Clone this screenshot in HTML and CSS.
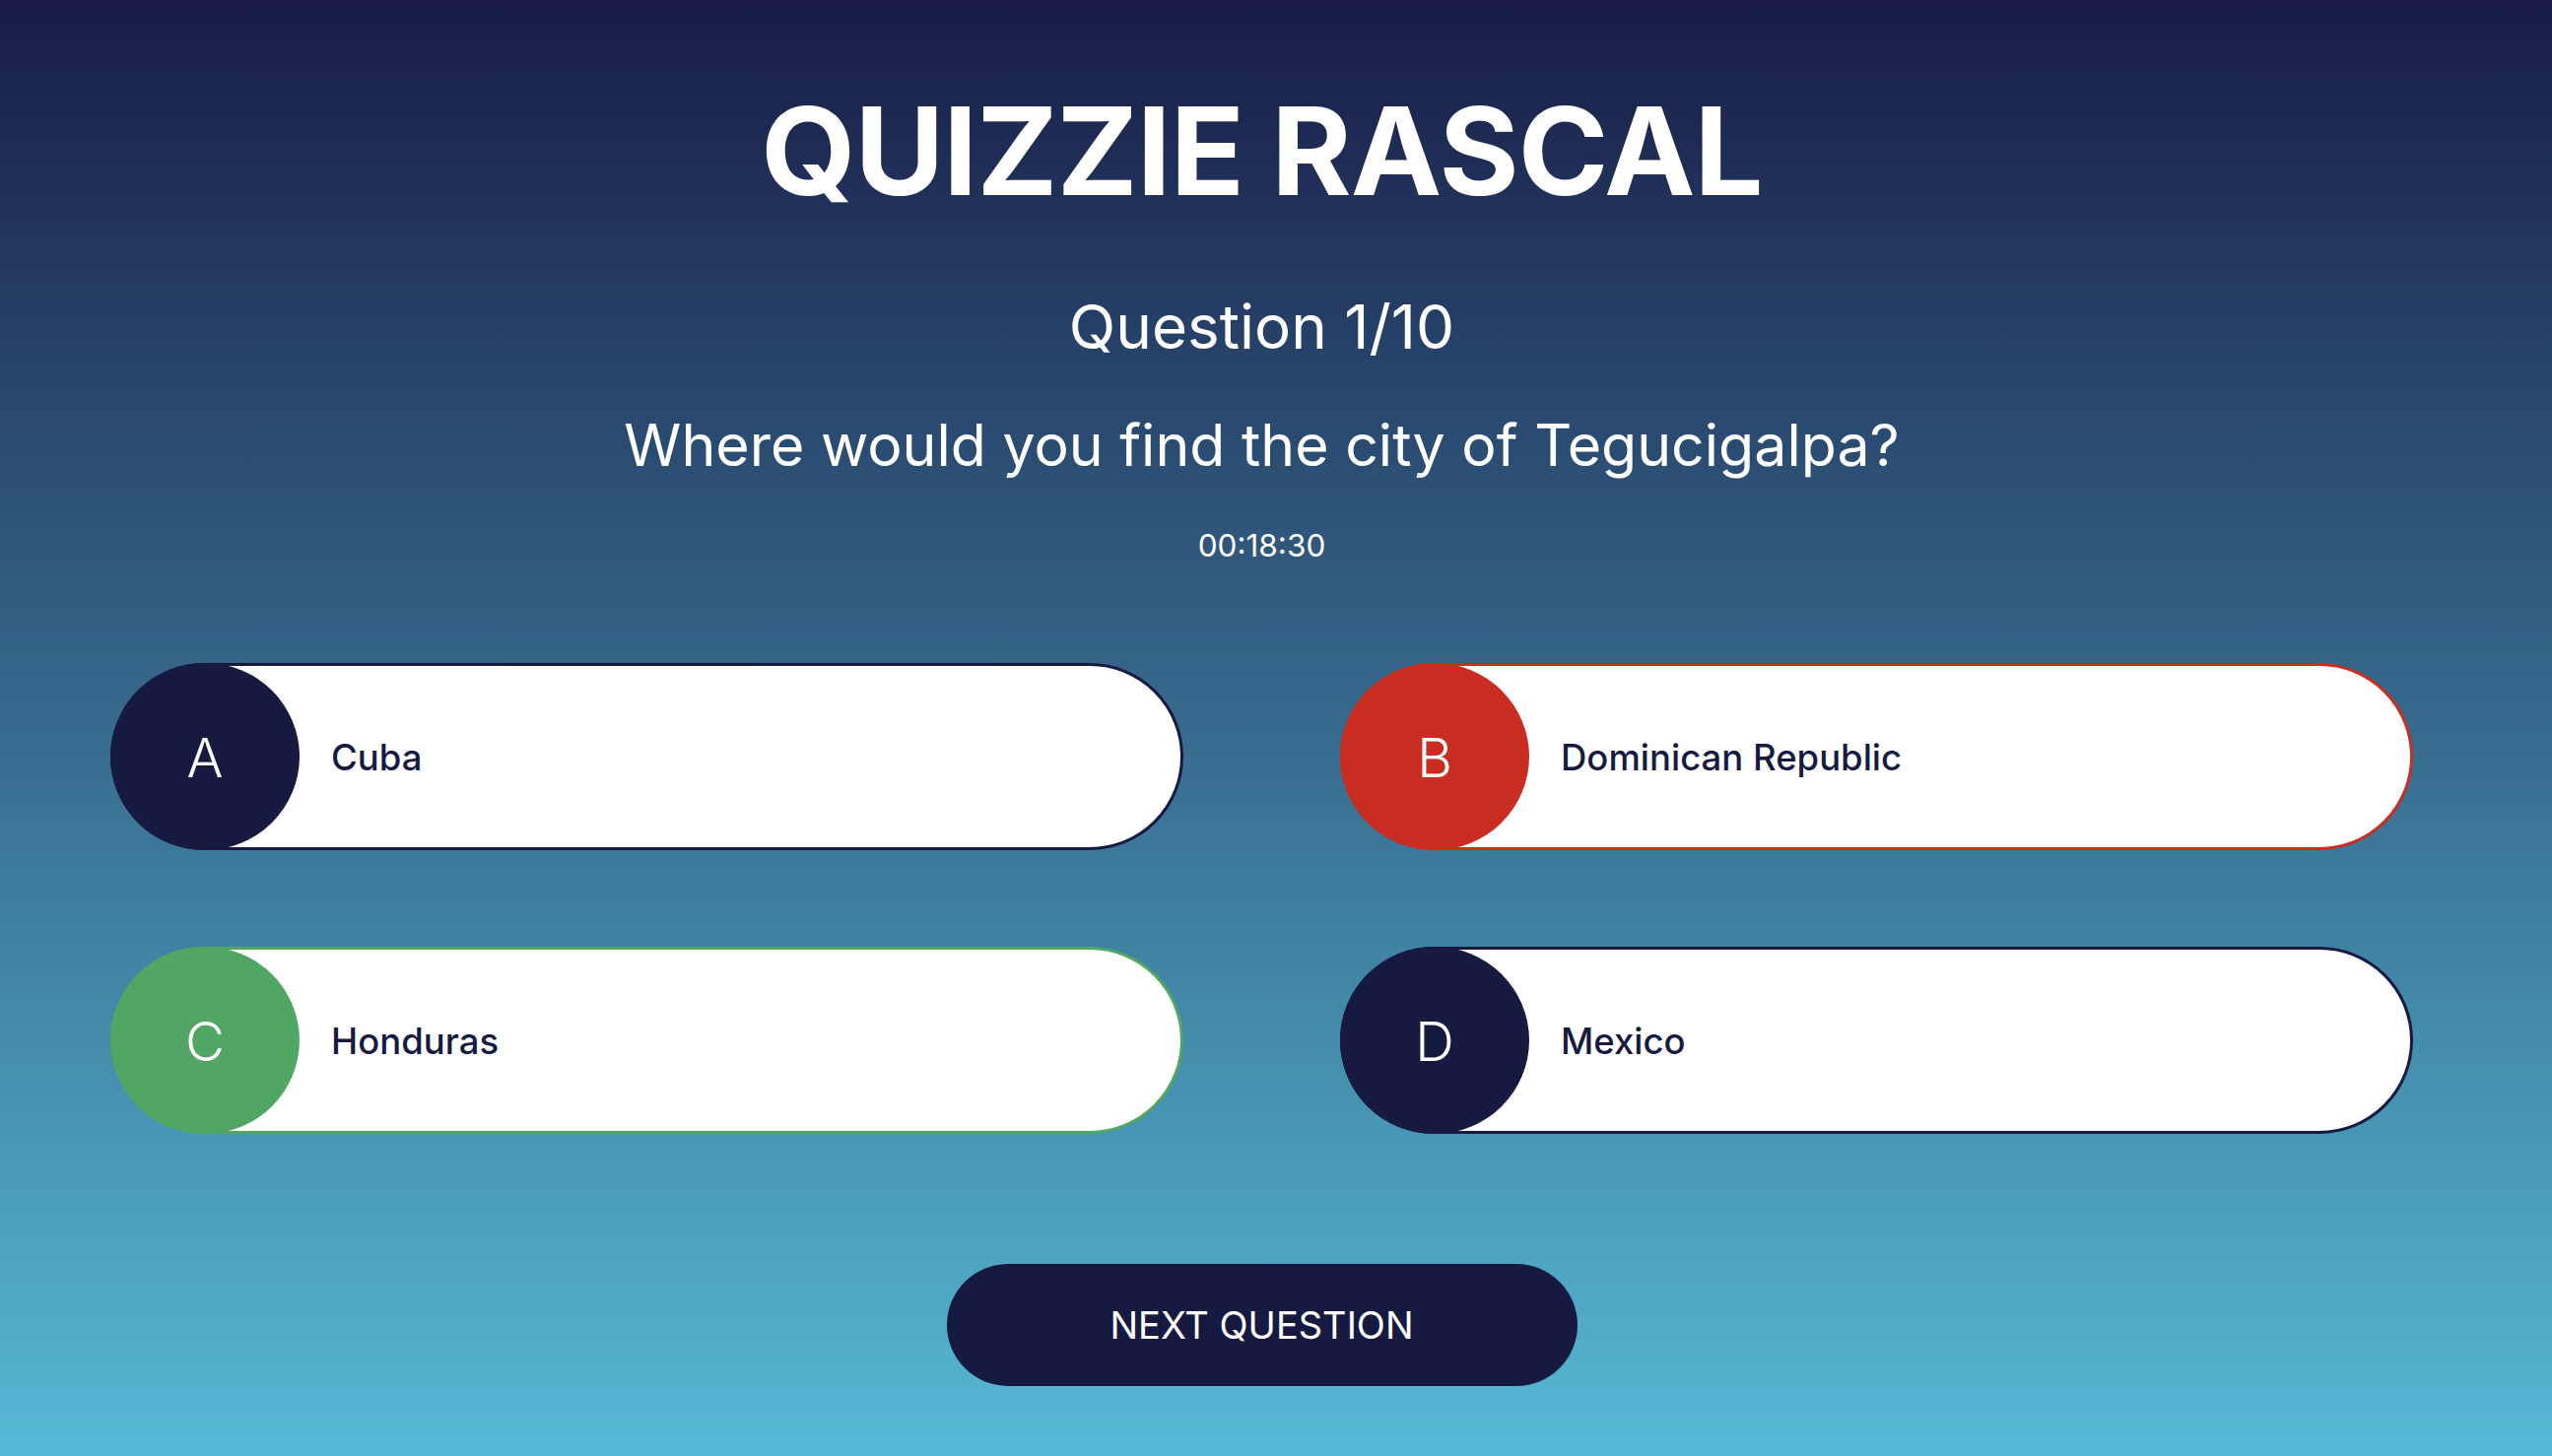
FILE: index.html
```html
<!DOCTYPE html>
<html lang="en">
<head>
<meta charset="utf-8">
<title>Quizzie Rascal</title>
<link rel="stylesheet" href="styles.css">
</head>
<body>
<main class="quiz">
  <h1 class="title">QUIZZIE RASCAL</h1>
  <h2 class="counter">Question 1/10</h2>
  <h3 class="question">Where would you find the city of Tegucigalpa?</h3>
  <div class="timer">00:18:30</div>
  <div class="answers">
    <div class="answer">
      <div class="letter">A</div>
      <div class="text">Cuba</div>
    </div>
    <div class="answer wrong">
      <div class="letter">B</div>
      <div class="text">Dominican Republic</div>
    </div>
    <div class="answer right">
      <div class="letter">C</div>
      <div class="text">Honduras</div>
    </div>
    <div class="answer">
      <div class="letter">D</div>
      <div class="text">Mexico</div>
    </div>
  </div>
  <button class="next">NEXT QUESTION</button>
</main>
</body>
</html>
```
FILE: styles.css
```css
html, body {
  margin: 0;
  padding: 0;
  height: 100%;
}
body {
  background: linear-gradient(to bottom, #181c46 0%, #56b9d5 100%);
  font-family: Inter, "Noto Sans", sans-serif;
  color: #ffffff;
  min-height: 1478px;
}
.quiz {
  display: flex;
  flex-direction: column;
  align-items: center;
  padding: 91px 141px 0 112px;
}
.title {
  margin: 0;
  font-size: 124px;
  font-weight: 700;
  line-height: 1;
  letter-spacing: -1px;
}
.counter {
  margin: 86px 0 0;
  font-size: 62px;
  font-weight: 400;
  line-height: 1;
}
.question {
  margin: 59px 0 0;
  font-size: 59px;
  font-weight: 400;
  line-height: 1;
}
.timer {
  margin-top: 57px;
  font-size: 31.5px;
  line-height: 1;
}
.answers {
  margin-top: 103px;
  width: 100%;
  display: grid;
  grid-template-columns: 1fr 1fr;
  column-gap: 159px;
  row-gap: 98px;
}
.answer {
  display: flex;
  align-items: center;
  height: 184px;
  background: #ffffff;
  border: 3px solid #171a40;
  border-radius: 95px;
}
.answer .letter {
  flex: none;
  width: 192px;
  height: 190px;
  margin: -3px 0 -3px -3px;
  border-radius: 50%;
  background: #171a40;
  display: flex;
  align-items: center;
  justify-content: center;
  font-size: 55px;
  font-weight: 300;
  color: #ffffff;
  padding-top: 2px;
  box-sizing: border-box;
}
.answer .text {
  margin-left: 32px;
  padding-top: 3px;
  font-size: 36.5px;
  font-weight: 500;
  color: #171a40;
}
.answer.wrong {
  border-color: #c92d22;
}
.answer.wrong .letter {
  background: #c92d22;
}
.answer.right {
  border-color: #52a664;
}
.answer.right .letter {
  background: #52a664;
}
.next {
  margin-top: 132px;
  width: 640px;
  height: 124px;
  border: none;
  border-radius: 62px;
  background: #171a40;
  color: #ffffff;
  font-family: Inter, "Noto Sans", sans-serif;
  font-size: 38px;
  font-weight: 400;
  cursor: pointer;
}
```
